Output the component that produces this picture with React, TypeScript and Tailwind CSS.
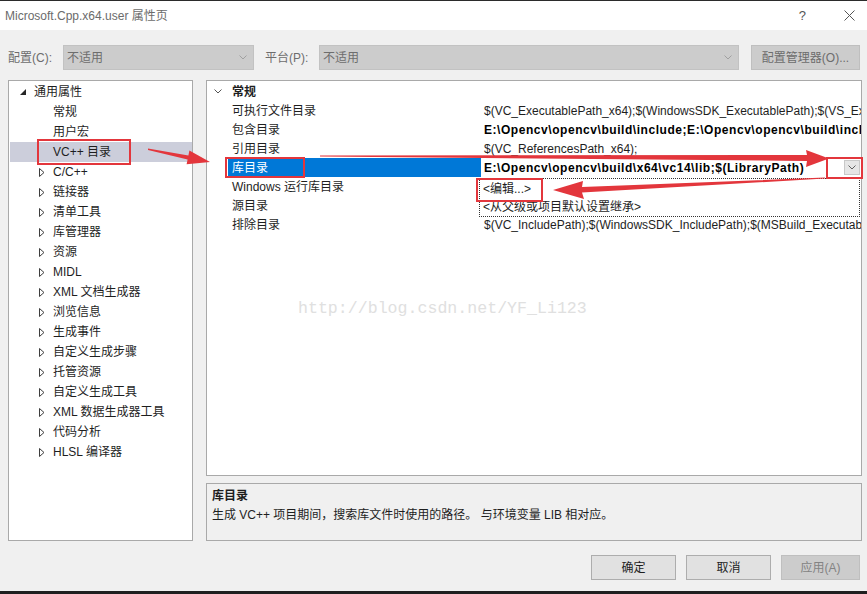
import React from "react";

const FONT = "font-['Liberation_Sans','Noto_Sans_CJK_SC',sans-serif]";

type TreeItem = { label: string; level: 0 | 1; expander?: "open" | "closed"; selected?: boolean };

const tree: TreeItem[] = [
  { label: "通用属性", level: 0, expander: "open" },
  { label: "常规", level: 1 },
  { label: "用户宏", level: 1 },
  { label: "VC++ 目录", level: 1, selected: true },
  { label: "C/C++", level: 1, expander: "closed" },
  { label: "链接器", level: 1, expander: "closed" },
  { label: "清单工具", level: 1, expander: "closed" },
  { label: "库管理器", level: 1, expander: "closed" },
  { label: "资源", level: 1, expander: "closed" },
  { label: "MIDL", level: 1, expander: "closed" },
  { label: "XML 文档生成器", level: 1, expander: "closed" },
  { label: "浏览信息", level: 1, expander: "closed" },
  { label: "生成事件", level: 1, expander: "closed" },
  { label: "自定义生成步骤", level: 1, expander: "closed" },
  { label: "托管资源", level: 1, expander: "closed" },
  { label: "自定义生成工具", level: 1, expander: "closed" },
  { label: "XML 数据生成器工具", level: 1, expander: "closed" },
  { label: "代码分析", level: 1, expander: "closed" },
  { label: "HLSL 编译器", level: 1, expander: "closed" },
];

type Prop = { name: string; value: string; bold?: boolean; selected?: boolean };

// values of the two rows under the open drop-down are hidden by it
const props: Prop[] = [
  { name: "可执行文件目录", value: "$(VC_ExecutablePath_x64);$(WindowsSDK_ExecutablePath);$(VS_ExecutablePath);$(MSBuild_ExecutablePath);$(FxCopDir);$(PATH);" },
  { name: "包含目录", value: "E:\\Opencv\\opencv\\build\\include;E:\\Opencv\\opencv\\build\\include\\opencv;E:\\Opencv\\opencv\\build\\include\\opencv2;$(IncludePath)", bold: true },
  { name: "引用目录", value: "$(VC_ReferencesPath_x64);" },
  { name: "库目录", value: "E:\\Opencv\\opencv\\build\\x64\\vc14\\lib;$(LibraryPath)", bold: true, selected: true },
  { name: "Windows 运行库目录", value: "" },
  { name: "源目录", value: "" },
  { name: "排除目录", value: "$(VC_IncludePath);$(WindowsSDK_IncludePath);$(MSBuild_ExecutablePath);$(VC_LibraryPath_x64);" },
];

function Chevron({ className = "", color = "#8a8a8a" }: { className?: string; color?: string }) {
  return (
    <svg width="8" height="5" viewBox="0 0 8 5" className={className}>
      <polyline points="0.5,0.5 4,4 7.5,0.5" fill="none" stroke={color} strokeWidth="1" />
    </svg>
  );
}

function Combo({ width, text }: { width: string; text: string }) {
  return (
    <div className={`${width} flex h-[25px] items-center justify-between border border-[#c2c2c2] bg-[#cccccc] pl-[3px] pr-[6px] text-[12px] text-[#6d6d6d]`}>
      <span>{text}</span>
      <Chevron color="#a0a0a0" />
    </div>
  );
}

function TreeRow({ item }: { item: TreeItem }) {
  return (
    <div
      className={`flex h-[20px] items-center text-[12px] text-[#1e1e1e] ${item.selected ? "ml-px bg-[#cccedb]" : ""}`}
    >
      <div className={item.level === 0 ? (item.selected ? "w-[10px]" : "w-[11px]") : item.selected ? "w-[29px]" : "w-[30px]"} />
      <div className="flex w-[14px] items-center">
        {item.expander === "open" && (
          <svg width="6" height="6" viewBox="0 0 6 6">
            <polygon points="6,0 6,6 0,6" fill="#262626" />
          </svg>
        )}
        {item.expander === "closed" && (
          <svg width="6" height="9" viewBox="0 0 6 9">
            <polygon points="0.5,0.5 5,4.5 0.5,8.5" fill="none" stroke="#3c3c3c" strokeWidth="1" />
          </svg>
        )}
      </div>
      <span className="whitespace-nowrap">{item.label}</span>
    </div>
  );
}

function PropRow({ p }: { p: Prop }) {
  return (
    <div className="flex h-[19px] text-[12px]">
      <div className="w-[21px]" />
      <div
        className={`flex w-[253px] items-center pl-[4px] ${p.selected ? "bg-[#0078d7] text-white" : "text-[#1e1e1e]"}`}
      >
        {p.name}
      </div>
      <div className="relative flex flex-1 items-center overflow-hidden pl-[3px]">
        <span className={`whitespace-nowrap ${p.bold ? "font-bold tracking-[0.55px] text-black" : "text-[#1e1e1e]"}`}>{p.value}</span>
        {p.selected && (
          <div className="absolute right-px top-[2px] flex h-[15px] w-[16px] items-center justify-center border border-[#c8c8c8] bg-[#e6e6e6]">
            <Chevron color="#606060" />
          </div>
        )}
      </div>
    </div>
  );
}

function Button({ label, disabled, width }: { label: string; disabled?: boolean; width: string }) {
  return (
    <div
      className={`${width} flex h-[25px] items-center justify-center border text-[12px] ${
        disabled ? "border-[#bfbfbf] bg-[#cccccc] text-[#838383]" : "border-[#adadad] bg-[#e1e1e1] text-[#1e1e1e]"
      }`}
    >
      {label}
    </div>
  );
}

function Annotations() {
  const red = "#e3363c";
  return (
    <svg className="pointer-events-none absolute inset-0" width="867" height="594" viewBox="0 0 867 594">
      <rect x="38" y="140" width="92" height="24" fill="none" stroke={red} strokeWidth="2" />
      <rect x="226" y="158" width="78" height="19" fill="none" stroke={red} strokeWidth="2" />
      <rect x="827" y="158" width="35" height="20" fill="none" stroke={red} strokeWidth="2" />
      <rect x="477" y="179" width="65" height="22" fill="none" stroke={red} strokeWidth="2" />
      <polygon
        points="148,148.4 188.4,155.4 189.4,150.5 210,162 186.6,164.3 187.6,159.4 148,150"
        fill={red}
      />
      <polygon points="320,155.6 807,155 806,150 829,158.5 806,167 807,161 320,156.6" fill={red} />
      <polygon points="553,190 583,181 582,187 825,177.5 825,178.6 582,192.5 584,199" fill={red} />
    </svg>
  );
}

export default function App() {
  return (
    <div className={`relative flex h-[594px] w-[867px] flex-col overflow-hidden bg-[#f0f0f0] ${FONT}`}>
      <div className="h-px bg-[#2b2b2b]" />
      {/* title bar */}
      <div className="flex h-[29px] items-center bg-white pl-[5px] text-[12px] text-[#6b6b6b]">
        <span className="flex-1">Microsoft.Cpp.x64.user 属性页</span>
        <span className="mr-[38px] text-[13px] text-[#555]">?</span>
        <svg width="11" height="11" viewBox="0 0 11 11" className="mr-[12px]">
          <line x1="0.5" y1="0.5" x2="10.5" y2="10.5" stroke="#555" strokeWidth="1" />
          <line x1="10.5" y1="0.5" x2="0.5" y2="10.5" stroke="#555" strokeWidth="1" />
        </svg>
      </div>

      {/* configuration row */}
      <div className="mt-[15px] flex h-[25px] items-center text-[12px] text-[#6d6d6d]">
        <span className="w-[63px] pl-[8px]">配置(C):</span>
        <Combo width="w-[191px]" text="不适用" />
        <span className="ml-[11px] w-[54px]">平台(P):</span>
        <Combo width="w-[420px]" text="不适用" />
        <div className="ml-[12px] flex h-[25px] w-[109px] items-center justify-center border border-[#bfbfbf] bg-[#cccccc] text-[12px] text-[#6d6d6d]">
          配置管理器(O)...
        </div>
      </div>

      {/* main */}
      <div className="mt-[10px] flex h-[461px] pl-[8px]">
        <div className="w-[185px] border border-[#a9a9a9] bg-white pt-px">
          {tree.map((t) => (
            <TreeRow key={t.label} item={t} />
          ))}
        </div>
        <div className="ml-[13px] flex w-[656px] flex-col">
          <div className="relative h-[396px] border border-[#a9a9a9] bg-white pt-px">
            <div className="flex h-[19px] items-center text-[12px]">
              <div className="flex w-[21px] justify-center pl-px">
                <Chevron color="#555" />
              </div>
              <span className="pl-[4px] font-bold text-[#1e1e1e]">常规</span>
            </div>
            {props.map((p) => (
              <PropRow key={p.name} p={p} />
            ))}
            {/* dropdown list */}
            <div className="absolute left-[272px] top-[97px] h-[39px] w-[381px] border border-dotted border-[#333] bg-white pt-px text-[12px] text-[#1e1e1e]">
              <div className="flex h-[18px] items-center pl-[3px]">&lt;编辑...&gt;</div>
              <div className="flex h-[18px] items-center pl-[3px]">&lt;从父级或项目默认设置继承&gt;</div>
            </div>
            {/* watermark */}
            <div className="pointer-events-none absolute left-[91px] top-[216px] font-['Liberation_Mono',monospace] text-[16.6px] text-[#e0e0e0]">
              http://blog.csdn.net/YF_Li123
            </div>
          </div>
          <div className="mt-[7px] h-[58px] border border-[#a9a9a9] bg-[#f0f0f0] pl-[5px] pt-[3px] text-[12px] text-[#1e1e1e]">
            <div className="font-bold">库目录</div>
            <div className="mt-px">生成 VC++ 项目期间，搜索库文件时使用的路径。 与环境变量 LIB 相对应。</div>
          </div>
        </div>
      </div>

      {/* buttons */}
      <div className="mt-[14px] flex h-[25px] pl-[591px]">
        <Button width="w-[85px]" label="确定" />
        <Button width="ml-[10px] w-[85px]" label="取消" />
        <Button width="ml-[10px] w-[79px]" label="应用(A)" disabled />
      </div>
      <div className="flex-1" />
      <div className="h-[3px] bg-[#1f1f1f]" />

      <Annotations />
    </div>
  );
}
